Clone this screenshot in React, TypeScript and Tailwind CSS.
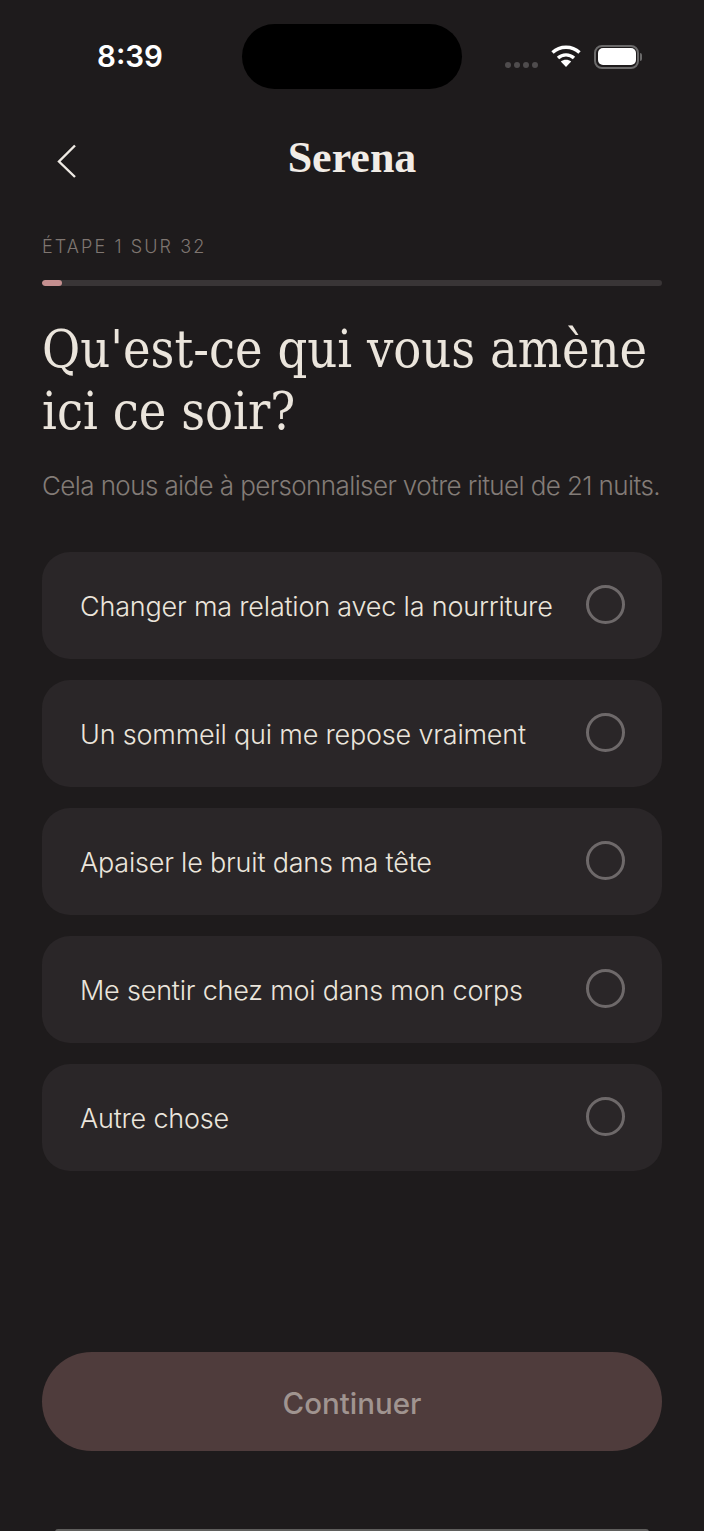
const options = [
  "Changer ma relation avec la nourriture",
  "Un sommeil qui me repose vraiment",
  "Apaiser le bruit dans ma tête",
  "Me sentir chez moi dans mon corps",
  "Autre chose",
];

export default function App() {
  return (
    <div className="relative flex h-[1531px] w-[704px] flex-col overflow-hidden bg-[#1e1b1c] px-[42px] font-['Inter',sans-serif]">
      <div className="-mx-[42px] flex h-[88px] items-start pt-[24px]">
        <div className="flex h-[65px] w-[242px] items-center justify-center pl-[18px] text-[29.5px] font-semibold text-white">8:39</div>
        <div className="h-[65px] w-[220px] rounded-full bg-black" />
        <div className="flex h-[65px] flex-1 items-center pl-[43px]">
          <div className="mt-[16px] flex gap-[3px]">
            <span className="h-[6px] w-[6px] rounded-full bg-[#4f4c4d]" />
            <span className="h-[6px] w-[6px] rounded-full bg-[#4f4c4d]" />
            <span className="h-[6px] w-[6px] rounded-full bg-[#4f4c4d]" />
            <span className="h-[6px] w-[6px] rounded-full bg-[#4f4c4d]" />
          </div>
          <svg className="ml-[12px] -mt-[2px]" width="32" height="24" viewBox="0 0 32 24" fill="none">
            <path d="M2.5 8.5C10 1.5 22 1.5 29.5 8.5" stroke="#fff" strokeWidth="3.4" />
            <path d="M8 14C12.5 9.8 19.5 9.8 24 14" stroke="#fff" strokeWidth="3.4" />
            <path d="M16 23L10.8 17.6C13.8 15 18.2 15 21.2 17.6Z" fill="#fff" />
          </svg>
          <div className="ml-[12px] flex items-center">
            <div className="h-[24px] w-[45px] rounded-[8px] border-2 border-[#6b6a6a] p-[1.5px]">
              <div className="h-full w-full rounded-[5px] bg-white" />
            </div>
            <div className="ml-[1px] h-[8px] w-[2px] rounded-r-full bg-[#6b6a6a]" />
          </div>
        </div>
      </div>

      <div className="relative mt-[38px] flex h-[62px] items-center justify-center">
        <svg className="absolute left-[14px] top-[18px]" width="22" height="36" viewBox="0 0 22 36" fill="none">
          <path d="M19 2.5L3 18.5L19 34" stroke="#efeae4" strokeWidth="2.4" transform="translate(0 -1)" />
        </svg>
        <div className="mt-[2px] font-['Liberation_Serif',serif] text-[44px] font-bold leading-none text-[#f1ece6]">Serena</div>
      </div>

      <div className="mt-[48px] text-[18px] font-light leading-[22px] tracking-[2.1px] text-[#7f7671]">ÉTAPE 1 SUR 32</div>
      <div className="mt-[22px] h-[6px] overflow-hidden rounded-full bg-[#393536]">
        <div className="h-full w-[20px] rounded-full bg-[#c58f8f]" />
      </div>

      <h1 className="mt-[32px] font-['DejaVu_Serif_Condensed','DejaVu_Serif',serif] text-[51.8px] font-normal leading-[62px] text-[#ebe5dc] [font-stretch:condensed]">
        Qu'est-ce qui vous amène ici ce soir?
      </h1>
      <p className="mt-[27px] whitespace-nowrap text-[26px] font-light leading-[34px] tracking-[-0.6px] text-[#837c77]">
        Cela nous aide à personnaliser votre rituel de 21 nuits.
      </p>

      <div className="mt-[49px] flex flex-col gap-[21.5px]">
        {options.map((o) => (
          <div key={o} className="flex h-[106.5px] items-center justify-between rounded-[28px] bg-[#2a2628] pl-[38px] pr-[37px]">
            <span className="mt-[4px] text-[27px] font-[350] tracking-[-0.2px] text-[#ebe5dc]">{o}</span>
            <span className="-mt-[1px] h-[39px] w-[39px] rounded-full border-[3px] border-[#6e696a]" />
          </div>
        ))}
      </div>

      <div className="absolute bottom-[80px] left-[42px] right-[42px] flex h-[99px] items-center justify-center rounded-full bg-[#4f3c3c] pt-[3px] text-[29.5px] font-medium text-[#a09490]">
        Continuer
      </div>
      <div className="absolute -bottom-[4px] left-[55px] right-[55px] h-[6px] rounded-full bg-[#5f5e5c]" />
    </div>
  );
}
